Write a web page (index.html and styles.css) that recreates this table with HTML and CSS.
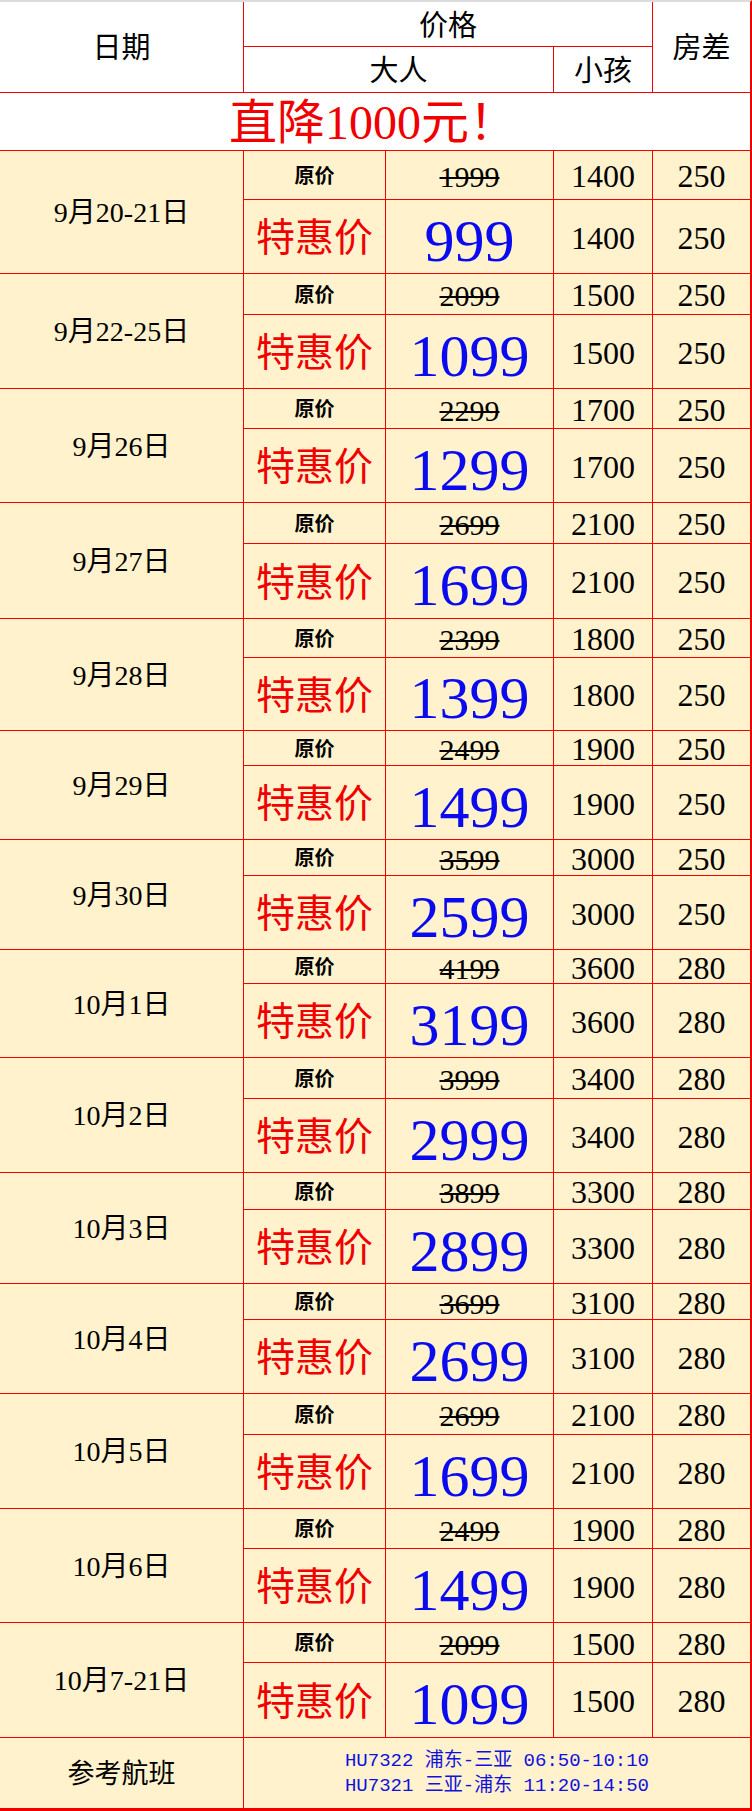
FILE: index.html
```html
<!DOCTYPE html>
<html lang="zh-CN">
<head>
<meta charset="utf-8">
<title>价格表</title>
<link rel="stylesheet" href="styles.css">
</head>
<body>
<div class="sheet">
  <div class="cell head c-date">日期</div>
  <div class="cell head c-price">价格</div>
  <div class="cell head c-room">房差</div>
  <div class="cell head c-adult">大人</div>
  <div class="cell head c-child">小孩</div>
  <div class="cell banner">直降1000元！</div>

  <div class="cell date">9月20-21日</div>
  <div class="cell label">原价</div><div class="cell orig"><s>1999</s></div><div class="cell num">1400</div><div class="cell num">250</div>
  <div class="cell special">特惠价</div><div class="cell deal">999</div><div class="cell num">1400</div><div class="cell num">250</div>

  <div class="cell date">9月22-25日</div>
  <div class="cell label">原价</div><div class="cell orig"><s>2099</s></div><div class="cell num">1500</div><div class="cell num">250</div>
  <div class="cell special">特惠价</div><div class="cell deal">1099</div><div class="cell num">1500</div><div class="cell num">250</div>

  <div class="cell date">9月26日</div>
  <div class="cell label">原价</div><div class="cell orig"><s>2299</s></div><div class="cell num">1700</div><div class="cell num">250</div>
  <div class="cell special">特惠价</div><div class="cell deal">1299</div><div class="cell num">1700</div><div class="cell num">250</div>

  <div class="cell date">9月27日</div>
  <div class="cell label">原价</div><div class="cell orig"><s>2699</s></div><div class="cell num">2100</div><div class="cell num">250</div>
  <div class="cell special">特惠价</div><div class="cell deal">1699</div><div class="cell num">2100</div><div class="cell num">250</div>

  <div class="cell date">9月28日</div>
  <div class="cell label">原价</div><div class="cell orig"><s>2399</s></div><div class="cell num">1800</div><div class="cell num">250</div>
  <div class="cell special">特惠价</div><div class="cell deal">1399</div><div class="cell num">1800</div><div class="cell num">250</div>

  <div class="cell date">9月29日</div>
  <div class="cell label">原价</div><div class="cell orig"><s>2499</s></div><div class="cell num">1900</div><div class="cell num">250</div>
  <div class="cell special">特惠价</div><div class="cell deal">1499</div><div class="cell num">1900</div><div class="cell num">250</div>

  <div class="cell date">9月30日</div>
  <div class="cell label">原价</div><div class="cell orig"><s>3599</s></div><div class="cell num">3000</div><div class="cell num">250</div>
  <div class="cell special">特惠价</div><div class="cell deal">2599</div><div class="cell num">3000</div><div class="cell num">250</div>

  <div class="cell date">10月1日</div>
  <div class="cell label">原价</div><div class="cell orig"><s>4199</s></div><div class="cell num">3600</div><div class="cell num">280</div>
  <div class="cell special">特惠价</div><div class="cell deal">3199</div><div class="cell num">3600</div><div class="cell num">280</div>

  <div class="cell date">10月2日</div>
  <div class="cell label">原价</div><div class="cell orig"><s>3999</s></div><div class="cell num">3400</div><div class="cell num">280</div>
  <div class="cell special">特惠价</div><div class="cell deal">2999</div><div class="cell num">3400</div><div class="cell num">280</div>

  <div class="cell date">10月3日</div>
  <div class="cell label">原价</div><div class="cell orig"><s>3899</s></div><div class="cell num">3300</div><div class="cell num">280</div>
  <div class="cell special">特惠价</div><div class="cell deal">2899</div><div class="cell num">3300</div><div class="cell num">280</div>

  <div class="cell date">10月4日</div>
  <div class="cell label">原价</div><div class="cell orig"><s>3699</s></div><div class="cell num">3100</div><div class="cell num">280</div>
  <div class="cell special">特惠价</div><div class="cell deal">2699</div><div class="cell num">3100</div><div class="cell num">280</div>

  <div class="cell date">10月5日</div>
  <div class="cell label">原价</div><div class="cell orig"><s>2699</s></div><div class="cell num">2100</div><div class="cell num">280</div>
  <div class="cell special">特惠价</div><div class="cell deal">1699</div><div class="cell num">2100</div><div class="cell num">280</div>

  <div class="cell date">10月6日</div>
  <div class="cell label">原价</div><div class="cell orig"><s>2499</s></div><div class="cell num">1900</div><div class="cell num">280</div>
  <div class="cell special">特惠价</div><div class="cell deal">1499</div><div class="cell num">1900</div><div class="cell num">280</div>

  <div class="cell date">10月7-21日</div>
  <div class="cell label">原价</div><div class="cell orig"><s>2099</s></div><div class="cell num">1500</div><div class="cell num">280</div>
  <div class="cell special">特惠价</div><div class="cell deal">1099</div><div class="cell num">1500</div><div class="cell num">280</div>

  <div class="cell foot-label">参考航班</div>
  <div class="cell flights">
    <div>HU7322 浦东-三亚 06:50-10:10</div>
    <div>HU7321 三亚-浦东 11:20-14:50</div>
  </div>
</div>
</body>
</html>
```

FILE: styles.css
```css
html, body {
  margin: 0;
  padding: 0;
  background: #ffffff;
}

.sheet {
  width: 752px;
  box-sizing: border-box;
  display: grid;
  grid-template-columns: 243px 141px 167px 98px 97px;
  grid-template-rows:
    44px 45px 57px
    48px 73px
    40px 73px
    39px 73px
    40px 74px
    38px 72px
    34px 73px
    35px 73px
    33px 73px
    40px 73px
    36px 73px
    35px 73px
    40px 73px
    39px 73px
    39px 74px
    70px;
  gap: 1px;
  background: #f20000;
  border-top: 2px solid #dcdcdc;
  border-right: 2px solid #f20000;
  border-bottom: 3px solid #f20000;
  font-family: "Liberation Serif", "Noto Sans CJK SC", serif;
  color: #000;
}

.cell {
  background: #fff2cc;
  display: flex;
  align-items: center;
  justify-content: center;
  white-space: nowrap;
  line-height: 1;
}

.head {
  background: #ffffff;
  font-size: 29px;
}

.c-date { grid-row: 1 / 3; grid-column: 1; padding-top: 2px; }
.c-price { grid-row: 1; grid-column: 2 / 5; padding-top: 4px; }
.c-room { grid-row: 1 / 3; grid-column: 5; padding-top: 2px; }
.c-adult { grid-row: 2; grid-column: 2 / 4; padding-top: 4px; }
.c-child { grid-row: 2; grid-column: 4; padding-top: 4px; }

.banner {
  grid-row: 3;
  grid-column: 1 / -1;
  background: #ffffff;
  color: #f00000;
  font-size: 48px;
  padding-right: 4px;
  padding-top: 3px;
}

.date {
  grid-row: span 2;
  grid-column: 1;
  font-size: 28px;
  padding-top: 2px;
}

.label {
  font-size: 20px;
  font-weight: bold;
  padding-top: 1px;
}

.orig {
  font-size: 30px;
  line-height: 0.9;
  padding-top: 3px;
}

.orig s {
  text-decoration-thickness: 2px;
}

.num {
  font-size: 32px;
  line-height: 0.9;
  padding-top: 3px;
}

.special {
  color: #f00000;
  font-size: 39px;
  padding-top: 2px;
}

.deal {
  color: #0a0af0;
  font-size: 60px;
  padding-top: 8px;
}

.foot-label {
  grid-column: 1;
  font-size: 27px;
  padding-top: 2px;
}

.flights {
  grid-column: 2 / -1;
  flex-direction: column;
  color: #1010e0;
  font-family: "Liberation Mono", "Noto Sans CJK SC", monospace;
  font-size: 19px;
  line-height: 25px;
  padding-top: 1px;
}
```
